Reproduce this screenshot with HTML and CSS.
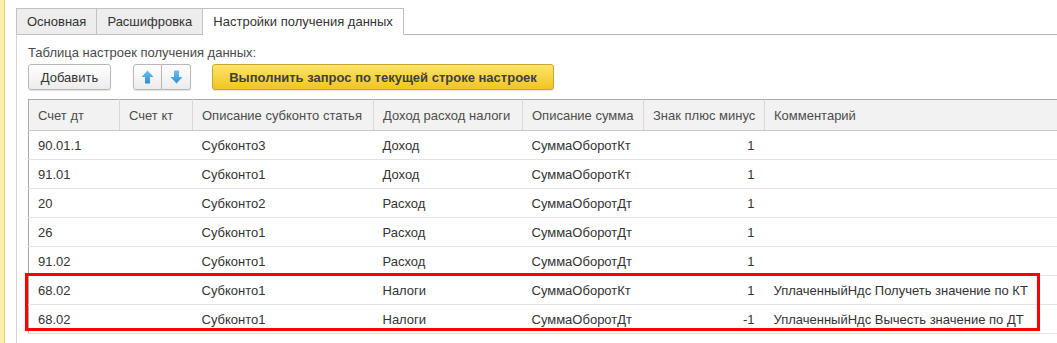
FILE: index.html
```html
<!DOCTYPE html>
<html>
<head>
<link rel="stylesheet" href="styles.css">
</head>
<body>

<div class="window">
  <div class="strip"></div>

  <div class="form">
    <div class="tabs">
      <div class="tab">Основная</div>
      <div class="tab">Расшифровка</div>
      <div class="tab active">Настройки получения данных</div>
      <div class="tab-fill"></div>
    </div>

    <div class="panel">
      <div class="caption">Таблица настроек получения данных:</div>

      <div class="toolbar">
        <button class="btn add">Добавить</button>
        <div class="btn-group">
          <button class="btn arrow">
            <svg width="13" height="14" viewBox="0 0 13 14">
              <defs>
                <linearGradient id="ga" x1="0" y1="0" x2="0" y2="1">
                  <stop offset="0" stop-color="#6cc0f2"/>
                  <stop offset="1" stop-color="#2f8fd6"/>
                </linearGradient>
              </defs>
              <path d="M6.5 0.5 L12.5 7 L9 7 L9 13.5 L4 13.5 L4 7 L0.5 7 Z" fill="url(#ga)"/>
            </svg>
          </button>
          <button class="btn arrow">
            <svg width="13" height="14" viewBox="0 0 13 14">
              <path d="M4 0.5 L9 0.5 L9 7 L12.5 7 L6.5 13.5 L0.5 7 L4 7 Z" fill="url(#ga)"/>
            </svg>
          </button>
        </div>
        <button class="btn run">Выполнить запрос по текущей строке настроек</button>
      </div>

      <div class="grid-wrap">
        <table class="grid">
          <colgroup>
            <col style="width:91px">
            <col style="width:73px">
            <col style="width:181px">
            <col style="width:149px">
            <col style="width:121px">
            <col style="width:121px">
            <col>
          </colgroup>
          <thead>
            <tr>
              <th>Счет дт</th>
              <th>Счет кт</th>
              <th>Описание субконто статья</th>
              <th>Доход расход налоги</th>
              <th>Описание сумма</th>
              <th>Знак плюс минус</th>
              <th>Комментарий</th>
            </tr>
          </thead>
          <tbody>
            <tr><td>90.01.1</td><td></td><td>Субконто3</td><td>Доход</td><td>СуммаОборотКт</td><td class="num">1</td><td></td></tr>
            <tr><td>91.01</td><td></td><td>Субконто1</td><td>Доход</td><td>СуммаОборотКт</td><td class="num">1</td><td></td></tr>
            <tr><td>20</td><td></td><td>Субконто2</td><td>Расход</td><td>СуммаОборотДт</td><td class="num">1</td><td></td></tr>
            <tr><td>26</td><td></td><td>Субконто1</td><td>Расход</td><td>СуммаОборотДт</td><td class="num">1</td><td></td></tr>
            <tr><td>91.02</td><td></td><td>Субконто1</td><td>Расход</td><td>СуммаОборотДт</td><td class="num">1</td><td></td></tr>
            <tr><td>68.02</td><td></td><td>Субконто1</td><td>Налоги</td><td>СуммаОборотКт</td><td class="num">1</td><td>УплаченныйНдс Получеть значение по КТ</td></tr>
            <tr><td>68.02</td><td></td><td>Субконто1</td><td>Налоги</td><td>СуммаОборотДт</td><td class="num">-1</td><td>УплаченныйНдс Вычесть значение по ДТ</td></tr>
          </tbody>
        </table>
        <div class="highlight"></div>
      </div>
    </div>
  </div>
</div>

</body>
</html>
```

FILE: styles.css
```css
body {
  margin: 0;
  padding: 0;
  background-color: #fff;
  font-family: "Liberation Sans", Arial, sans-serif;
  font-size: 13px;
  color: #333;
}

.window {
  display: flex;
  height: 343px;
  overflow: hidden;
}

.strip {
  width: 4px;
  background-color: #fbeea6;
  border-right: 1px solid #e3d38a;
}

.form {
  flex: 1;
  padding-left: 11px;
  padding-top: 8px;
  display: flex;
  flex-direction: column;
  min-width: 0;
}

.tabs {
  display: flex;
  height: 27px;
}

.tab {
  box-sizing: border-box;
  height: 27px;
  padding: 0 10px 0 10px;
  line-height: 26px;
  font-size: 13px;
  color: #333;
  background-color: #ededed;
  border: 1px solid #c2c2c2;
  border-left: none;
}

.tab:first-child {
  border-left: 1px solid #c2c2c2;
}

.tab.active {
  background-color: #fff;
  border-color: #bdbdbd;
  border-bottom-color: #fff;
}

.tab-fill {
  flex: 1;
  border-bottom: 1px solid #b3b3b3;
}

.panel {
  flex: 1;
  border-left: 1px solid #d4d4d4;
  padding: 10px 0 0 11px;
  overflow: hidden;
  min-width: 0;
}

.caption {
  height: 16px;
  line-height: 15px;
  color: #4a4a4a;
}

.toolbar {
  display: flex;
  align-items: center;
  margin-top: 3px;
  height: 26px;
}

.btn {
  box-sizing: border-box;
  height: 26px;
  border: 1px solid #b8b8b8;
  border-radius: 3px;
  background: linear-gradient(#ffffff, #ececec);
  box-shadow: 0 1px 1px rgba(0, 0, 0, 0.12);
  font-family: "Liberation Sans", Arial, sans-serif;
  font-size: 13px;
  color: #333;
  padding: 0;
  cursor: pointer;
}

.add {
  width: 83px;
}

.btn-group {
  display: flex;
  margin-left: 22px;
}

.btn-group .arrow {
  width: 29px;
  display: flex;
  align-items: center;
  justify-content: center;
}

.btn-group .arrow:first-child {
  border-radius: 3px 0 0 3px;
}

.btn-group .arrow:last-child {
  border-left: none;
  border-radius: 0 3px 3px 0;
}

.run {
  margin-left: 21px;
  width: 342px;
  font-weight: bold;
  color: #3f3f3f;
  border-color: #c8a72c;
  background: linear-gradient(#fde46a, #f1c423);
}

.grid-wrap {
  position: relative;
  margin-top: 9px;
  width: 1060px;
}

.grid {
  table-layout: fixed;
  width: 1060px;
  border-collapse: collapse;
  border-top: 1px solid #a8a8a8;
  border-left: 1px solid #a8a8a8;
}

.grid th {
  height: 30px;
  padding: 0 9px;
  background-color: #f2f2f2;
  font-weight: normal;
  text-align: left;
  color: #4d4d4d;
  white-space: nowrap;
  border-right: 1px solid #d9d9d9;
  border-bottom: 1px solid #c9c9c9;
}

.grid td {
  height: 28px;
  padding: 0 9px;
  white-space: nowrap;
  overflow: hidden;
  border-bottom: 1px solid #e3e3e3;
}

.grid td.num {
  text-align: right;
  padding-right: 10px;
}

.highlight {
  position: absolute;
  left: -3px;
  top: 174px;
  width: 1015px;
  height: 58px;
  box-sizing: border-box;
  border: 3px solid #f00;
}
```
